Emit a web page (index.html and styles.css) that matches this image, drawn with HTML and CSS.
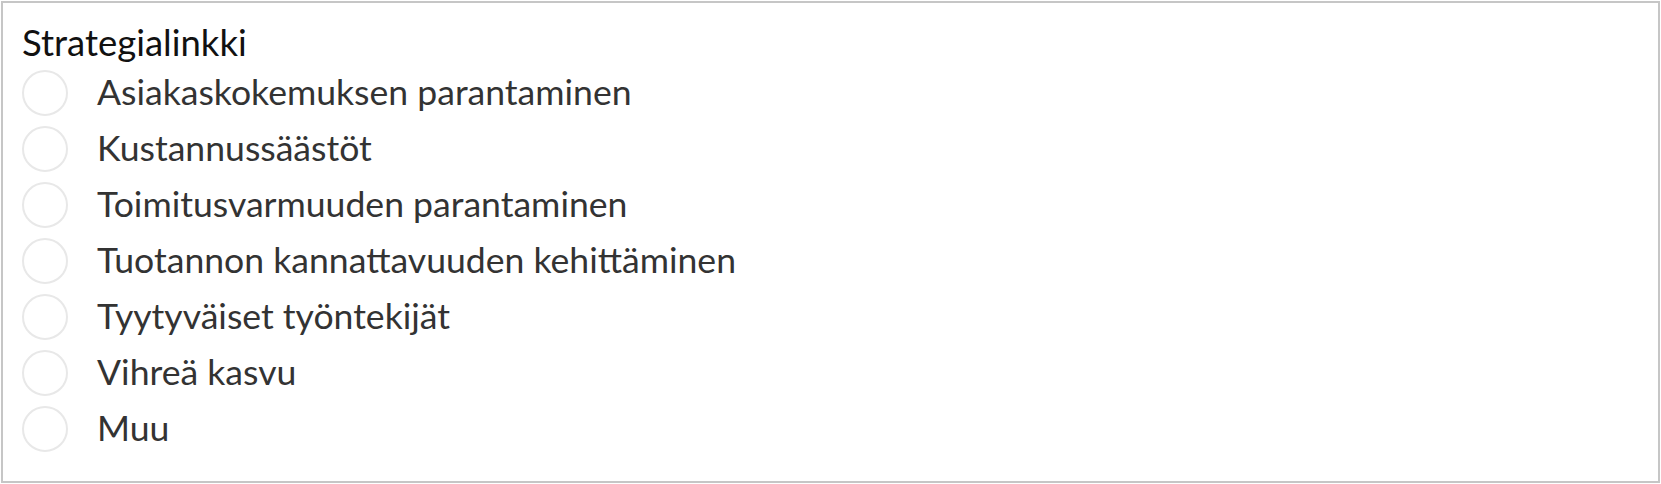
FILE: index.html
```html
<!DOCTYPE html>
<html lang="fi">
<head>
<meta charset="utf-8">
<link rel="stylesheet" href="styles.css">
</head>
<body>
<fieldset class="question">
  <div class="title">Strategialinkki</div>
  <div class="options">
    <label class="option"><span class="radio"></span><span class="label">Asiakaskokemuksen parantaminen</span></label>
    <label class="option"><span class="radio"></span><span class="label">Kustannussäästöt</span></label>
    <label class="option"><span class="radio"></span><span class="label">Toimitusvarmuuden parantaminen</span></label>
    <label class="option"><span class="radio"></span><span class="label">Tuotannon kannattavuuden kehittäminen</span></label>
    <label class="option"><span class="radio"></span><span class="label">Tyytyväiset työntekijät</span></label>
    <label class="option"><span class="radio"></span><span class="label">Vihreä kasvu</span></label>
    <label class="option"><span class="radio"></span><span class="label">Muu</span></label>
  </div>
</fieldset>
</body>
</html>
```
FILE: styles.css
```css
html, body {
  margin: 0;
  padding: 0;
  background: #ffffff;
}
body {
  padding: 1px;
  font-family: Lato, "Liberation Sans", sans-serif;
}
.question {
  box-sizing: border-box;
  margin: 0;
  width: 1659px;
  height: 482px;
  border: 2px solid #c6c6c6;
  padding: 20px 19px 0 19px;
  min-width: 0;
}
.title {
  font-size: 36.5px;
  line-height: 38px;
  color: #111111;
}
.options {
  display: flex;
  flex-direction: column;
  margin-top: 4px;
}
.option {
  display: flex;
  align-items: center;
  height: 56px;
}
.radio {
  box-sizing: border-box;
  width: 46px;
  height: 46px;
  border: 2px solid #e8e8e8;
  border-radius: 50%;
  flex: none;
}
.label {
  margin-left: 29px;
  padding-bottom: 2px;
  font-size: 35.6px;
  line-height: 34px;
  color: #333333;
}
```
